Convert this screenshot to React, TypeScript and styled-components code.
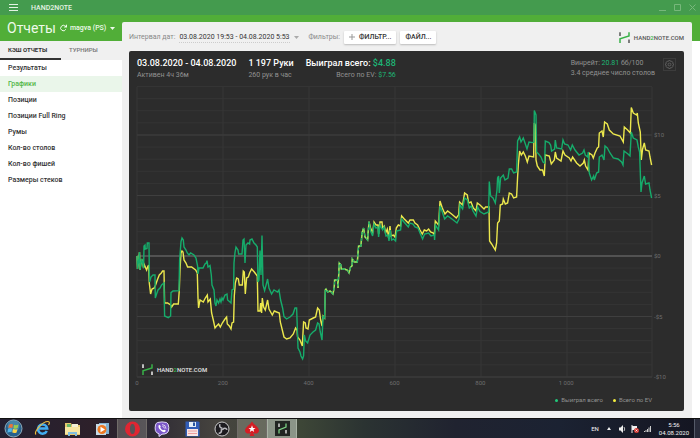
import React from 'react';
import styled, { createGlobalStyle } from 'styled-components';

const Global = createGlobalStyle`
  * { box-sizing: border-box; }
  body { margin: 0; font-family: Roboto, "Noto Sans", sans-serif; font-size: 7px; color: #333; }
  button, select { font: inherit; color: inherit; border: 0; background: none; padding: 0; margin: 0; appearance: none; cursor: pointer; }
  a { color: inherit; text-decoration: none; }
  svg { display: block; flex: none; }
`;

const Page = styled.div`
  display: flex;
  flex-direction: column;
  height: 100vh;
  min-height: 400px;
  background: #fff;
`;
const TitleBar = styled.header`
  display: flex;
  align-items: center;
  flex: none;
  height: 15px;
  padding: 0 4px 0 9px;
  background: #449b4e;
  color: #e4f3e4;
`;
const AppName = styled.span`
  margin-left: 13px;
  font-size: 7px;
  line-height: 10px;
  font-weight: 500;
`;
const WindowButtons = styled.div`
  display: flex;
  gap: 8px;
  margin-left: auto;
`;
const IconButton = styled.button<{ $tone?: string }>`
  display: flex;
  color: ${p => p.$tone || 'inherit'};
`;
const Body = styled.div`
  display: grid;
  grid-template-columns: 122px 1fr;
  flex: 1;
  min-height: 0;
  padding-right: 8px;
  background: linear-gradient(#51ae38 0, #51ae38 26px, #fff 26px);
`;
const Sidebar = styled.aside`
  display: flex;
  flex-direction: column;
`;
const SideHead = styled.div`
  display: flex;
  align-items: center;
  height: 26px;
  padding-left: 7px;
  color: #eefaea;
`;
const Title = styled.h1`
  margin: 0 4px 0 0;
  font-size: 14px;
  line-height: 18px;
  font-weight: 400;
`;
const Picker = styled.label<{ $gap: number }>`
  display: flex;
  align-items: center;
  gap: ${p => p.$gap}px;
`;
const RoomSelect = styled.select`
  margin-left: 3px;
  font-size: 7px;
  line-height: 10px;
  font-weight: 500;
  option { color: #333; }
`;
const Tabs = styled.div`
  display: grid;
  grid-template-columns: 1fr 1fr;
  height: 19px;
  background: #f0f0f0;
`;
const Tab = styled.button<{ $active?: boolean }>`
  padding-left: 8px;
  text-align: left;
  font-size: 6px;
  line-height: 10px;
  font-weight: ${p => (p.$active ? 700 : 500)};
  color: ${p => (p.$active ? '#333' : '#777')};
  border-bottom: 2px solid ${p => (p.$active ? '#333' : 'transparent')};
`;
const Nav = styled.nav`
  display: flex;
  flex-direction: column;
`;
const NavLink = styled.a<{ $active?: boolean }>`
  padding: 0 8px;
  font-size: 7px;
  line-height: 16px;
  font-weight: 500;
  color: ${p => (p.$active ? '#53b748' : '#333')};
  background: ${p => (p.$active ? '#eaf6ea' : 'transparent')};
`;
const Content = styled.main`
  display: flex;
  flex-direction: column;
  min-height: 0;
  margin-top: 7px;
  padding: 5px 8px 7px 7px;
  border-radius: 2px 2px 0 0;
  background: #f0f0f0;
`;
const Toolbar = styled.div`
  display: flex;
  align-items: center;
  height: 20px;
  margin-bottom: 4px;
`;
const Caption = styled.span`
  color: #888;
  font-size: 7px;
  line-height: 10px;
`;
const DateSelect = styled.select`
  font-size: 7px;
  line-height: 10px;
  border-bottom: 1px dotted #ccc;
`;
const Raised = styled.button`
  display: flex;
  align-items: center;
  gap: 4px;
  height: 13px;
  margin-left: 4px;
  padding: 0 5px;
  border-radius: 1px;
  background: #fff;
  box-shadow: 0 1px 2px #bbb;
  font-size: 7px;
  font-weight: 500;
`;
const Brand = styled.div<{ $dark?: boolean }>`
  display: flex;
  align-items: center;
  gap: 4px;
  color: ${p => (p.$dark ? '#e6e6e6' : '#555')};
  font-size: 6px;
  line-height: 11px;
  font-weight: 500;
  b { color: #35b34a; font-weight: 500; }
`;
const BrandRight = styled.div`
  margin-left: auto;
`;
const Card = styled.section`
  display: flex;
  flex-direction: column;
  flex: 1;
  min-height: 0;
  padding: 6px 8px;
  border-radius: 2px;
  background: #2c2c2c;
  color: #fff;
`;
const Stats = styled.div`
  display: flex;
  height: 30px;
`;
const Stat = styled.div<{ $gap?: number; $right?: boolean }>`
  margin-left: ${p => p.$gap || 0}px;
  text-align: ${p => (p.$right ? 'right' : 'left')};
  white-space: nowrap;
`;
const Big = styled.div`
  font-size: 9px;
  line-height: 13px;
  font-weight: 500;
`;
const Small = styled.div`
  font-size: 7px;
  line-height: 10px;
  color: #929292;
`;
const Money = styled.span`
  color: #1db676;
`;
const Side = styled.div`
  display: flex;
  align-items: flex-start;
  gap: 8px;
  margin-left: auto;
  padding-top: 1px;
`;
const Gear = styled.button`
  display: grid;
  place-items: center;
  width: 13px;
  height: 13px;
  border: 1px solid #3c3c3c;
  color: #666;
`;
const ChartGrid = styled.div`
  display: grid;
  grid-template-columns: 1fr 24px;
  grid-template-rows: 1fr 12px;
  flex: 1;
  min-height: 0;
`;
const Plot = styled.div`
  position: relative;
  min-height: 0;
`;
const PlotSvg = styled.svg`
  width: 100%;
  height: 100%;
  overflow: visible;
  path { fill: none; vector-effect: non-scaling-stroke; }
`;
const Watermark = styled.div`
  position: absolute;
  left: 5px;
  bottom: 2px;
  padding-right: 3px;
  background: #2c2c2c;
`;
const YAxis = styled.div`
  display: grid;
  grid-template-rows: 4fr 5fr 5fr 5fr 5fr;
  padding-left: 2px;
`;
const YLabel = styled.span`
  align-self: end;
  margin-bottom: -5px;
  font-size: 6px;
  line-height: 10px;
  color: #6e6e6e;
`;
const XAxis = styled.div`
  display: grid;
  grid-template-columns: repeat(6, 1fr);
`;
const XLabel = styled.span`
  width: 24px;
  margin-left: -12px;
  padding-top: 1px;
  text-align: center;
  font-size: 6px;
  line-height: 10px;
  color: #6e6e6e;
`;
const Legend = styled.div`
  display: flex;
  justify-content: flex-end;
  gap: 10px;
  padding: 6px 24px 0 0;
  font-size: 6px;
  line-height: 10px;
  color: #929292;
`;
const LegendItem = styled.span<{ $color: string }>`
  display: flex;
  align-items: center;
  gap: 3px;
  &::before {
    content: '';
    width: 3px;
    height: 3px;
    border-radius: 2px;
    background: ${p => p.$color};
  }
`;
const Taskbar = styled.footer`
  display: flex;
  align-items: stretch;
  flex: none;
  height: 20px;
  border-top: 1px solid #111;
  background: linear-gradient(90deg, #242031 0, #2d202a 13%, #2b2733 20%, #46443f 31%, #3d4637 43%, #2b3332 52%, #202330 65%, #1b2232 80%, #141521 100%);
  color: #f4f4f4;
`;
const TaskButton = styled.button<{ $open?: boolean; $focus?: boolean; $start?: boolean }>`
  display: grid;
  place-items: center;
  width: ${p => (p.$start ? 27 : 30)}px;
  border: 1px solid ${p => (p.$focus ? '#a9b3a5' : p.$open ? '#706c69' : 'transparent')};
  border-width: 0 1px;
  background: ${p => (p.$focus ? '#8b9588' : p.$open ? 'rgba(220,220,200,0.25)' : 'none')};
`;
const Tray = styled.div`
  display: flex;
  align-items: center;
  gap: 8px;
  margin-left: auto;
  font-size: 6px;
`;
const TrayIcons = styled.div`
  display: flex;
  align-items: center;
  gap: 5px;
`;
const Clock = styled.div`
  text-align: center;
  font-size: 6px;
  line-height: 8px;
`;
const Desktop = styled.button`
  align-self: stretch;
  width: 6px;
  margin-left: -3px;
  border-left: 1px solid #555a68;
  background: #292b3a;
`;

const stroke = { fill: 'none', stroke: 'currentColor' };

const Logo = ({ tone }: { tone: string }) => (
  <svg width="11" height="11" viewBox="0 0 11 11" fill="none" strokeWidth="1.500">
    <path d="M1 .3V4M10 7.400V11" stroke={tone} />
    <path d="M1 11V6.900L10 4V.3" stroke="#38b148" />
  </svg>
);
const BrandMark = ({ dark }: { dark?: boolean }) => (
  <Brand $dark={dark}>
    <Logo tone={dark ? '#eee' : '#555'} />
    <span>HAND<b>2</b>NOTE.COM</span>
  </Brand>
);
const Caret = ({ color }: { color: string }) => (
  <svg width="5" height="3" viewBox="0 0 5 3"><path d="M0 0h5L2.500 3z" fill={color} /></svg>
);

const start = '137,256 137.500,269 138.600,261 139.500,252 140,270 141.600,259 142.500,262 143.600,268';
const rise = '325.300,290 326,289 327.600,292 330.300,291 333,294 334.300,287 334.600,280 337.600,280 338,288 339.300,263 341,265 341.300,269 344.300,269 347.300,270 349,273 350.600,267 352,266 352.300,259 354.300,262 357.300,262 358.600,246 361,246 362,233 363.600,228 365,237 367.600,240 369,221.600';

const wonLine = `${start} 144,246 145,245 145.300,249 147,248.500 147.300,243 149,243 149.300,272 149.600,282 151,277 153,275 155,275 155.300,298 156.600,294 158,290 160,288 161.600,285 164,283 164.600,316 168.300,317.600 170.600,316 171,292.600 173,291 179,290.600 179.600,260 181,241.600 182,238 183.300,240 184,247 186,250 187.300,253 189,255 190.600,253 194,255 196,258 197.600,266 198,274 199,268 203,268 205,264 206.300,263 207,260.600 208,267 210,265.600 211.300,275 212,285 214,290 215,303 216,306 217,300 218.600,303 220,299 221,302 222,298 223,300 225,295 227,294 227.600,300 230,302 231,303 232,290 233.600,289 234,263 235,252.600 236,247 238,250 238.600,254 242,254 243,240 244,239 245,263 246,245 248,243 249.600,244 250,240 252,239 254,243 256,245 257.300,247 258,282 259,280 260,250.600 261,275 262,235.600 263,285 264.600,290.600 266.600,283 267.600,279 269,288 271.600,294 274,290 277.600,292 279,290 280.600,300 282.600,308 284,316.600 286.600,319 290,317 293,314 295,308 296.600,308 297.300,327 298,348 300,352 301,356 302.600,359 303.600,356 304.300,335 305.600,341 307.600,343 310,335 313,332 315.600,330 317.600,323 319,324 320.300,332 322,340 323,316.600 324.600,318 ${rise} 370.600,231 372.600,236 374,224 376,228 378,227 378.600,237 380,225 382.600,230 384,227 386,236 388,235 389,241 390.300,230 391.600,240 393.600,239 395.600,241 396.600,231 400.600,230 401.600,219 404,222 408.300,227 410,223 413,224 415,227 418,228 420,233 422.600,239 424.600,234 428.600,233 431,236 434.300,235 434.600,240 435.300,225 438.600,230 440,206 442,211 444.600,219 447.600,216 452,219 457,223 459,219 460,205 462.600,209 464.600,198 467.300,200 469.300,208 471.300,206 473,211 476,216 477.600,207 480,211.600 484,214 488.600,212 489.300,181.600 490.600,196 493,198 495.300,203 497,190 497.600,178 498.600,176 499.300,193 500.600,178 503.300,175 505,180 508,178 509.300,169 511.600,169 513.600,173 516.600,172 517.600,141 519.600,137 521,142 523.300,138 525,143 527,149 529,142 532.600,142.600 534,142 534.300,110.600 536,115 536.600,152 538.600,154 541,157 543,162 544.600,163 545.300,141 549,142.600 550.600,145 551.600,151 554.600,149 555.300,140 556.600,148 561.600,149 563,140 564.600,144 568,145 570.600,150 572.300,145 575,150 579,155 582.600,153 584,150 585.300,155 587.600,157 588.300,152 589.300,173 591.600,180 593.600,176 594.300,180 596.600,173 598.600,172 599.300,157 602,155 604,160 605,146 607.300,148 610,153 613.300,158 618,159 621.600,162 623,165 624,151 628,154 630,156 631.300,132 633.300,138 637,140 638.300,147 639.600,152 641,192 642,183 644.300,176 645.600,184 649,183 650,190 651.600,198`;

const evLine = `${start} 144,264 146.600,270 147.600,267 148.600,265 149.300,283 150.600,294 152,289 154.300,288 155.600,285 157.300,280 159.300,275 161.300,273 162.600,271 164,271 164.600,303 167.600,303 170.600,305 171.600,307 173.600,304 178.300,304 179.300,290 180,270 181,253 182,251 183,252 184,260 186,263 187.600,267 191.600,267 195.600,270 197.300,273 198,298 198.600,308 200,300 203.300,302 205.300,298 207.300,295 208,302 210.300,299 211.600,313 213.300,320 215,328 216.600,326 218.600,324 220.300,327 222.300,323 225,319 226.600,317 227.300,324 229.300,326 231,329 232,323 233.600,322 234.300,296 235.300,283 236.600,278 238.300,279 239.300,285 242.300,285 243.300,271 244.300,272 245.300,294 246.600,278 248.300,277 249.600,273 251.600,269 254.300,272 257.300,276 258,311 260,311 260.600,303 261.600,313 262.300,298 263.600,307 265.300,310 267.600,300 269,309 272.300,315 274.300,311 276.600,312 279.300,313 280.300,322 282.300,330 284,337 286.600,339 290,338 293.300,334 295.600,328 297,330 297.600,337 300,340 302.300,346 303.600,322 305.300,323 306,328 308,329 309.300,320 313.300,318 315.600,317 317.600,308 319.300,310 320.600,320 322,326 323,316 324.600,318 ${rise} 370.600,228 372.600,233 374,222 376,225 378,225 378.600,234 380,222 382,222 382.600,228 384.300,226 385.600,233 387.300,229 388.600,238 390,226 391,236 393.300,235 395,237 396.300,228 398.300,225 400.600,226 401.600,216 404.300,219 408.300,223 410,220 413.300,220 415,223 417.600,225 420,230 422.300,234 424.300,230 426.600,231 428.600,229 430.600,232 433.300,233 434.300,235 435.300,221 438.600,225 440,201 442.300,208 445,214 447.600,211 451.600,214 456.300,218 458.600,215 459.600,202 462.600,205 464.600,193 467.300,195 468.600,203 471,202 473.300,208 476,211 477.300,203 480,205 484,209 485.600,207 489,207 489.600,241 491.600,244 495.300,250 496.600,243 497.600,223 499.300,221 500.300,205 502.600,204 503.300,199 505.300,204 507.600,203 509.300,193 511.600,194 513.600,198 516.600,197 517.600,177 518.300,165 519.600,151 521.300,155 523.300,152 525.300,156 527.300,162 529,156 533.600,157 534.300,123 535.300,125 536,160 537.300,166 540,170 542.600,170 544.300,176 545.300,155 549.300,156 551.300,164 554.300,160 555.300,152 556.600,158 561,161 563,151 565,155 569.300,158 571,161 572.600,157 576.600,163 580,166 583.300,163 584.300,160 585.600,166 588,170 589,153 592,155 593.300,158 595,153 597.300,148 598.600,147 599.300,133 602,131 603.300,137 604.600,122 607.300,124 609.300,130 613.300,134 620,136 623.300,142 624.300,127 627.600,130 630.300,133 631.300,107.600 633.300,113 636.600,115 637.300,113 638.300,123 640.300,132 641.300,160 642.600,149 644.300,143 645.600,150 649,151 650,157 651.600,165`;

const minorGrid = Array.from({ length: 25 }, (_, i) => `M137 ${(86.6 + i * 12.1).toFixed(1)}H652`).join('');
const majorGrid = [135, 195.5, 316.5, 377].map(y => `M137 ${y}H652`).join('');
const columns = [137, 223, 309, 395, 481, 567, 652].map(x => `M${x} 87V377`).join('');

const reports = ['Результаты', 'Графики', 'Позиции', 'Позиции Full Ring', 'Румы', 'Кол-во столов', 'Кол-во фишей', 'Размеры стеков'];

const Windows = () => (
  <svg width="19" height="19" viewBox="0 0 19 19">
    <circle cx="9.500" cy="9.500" r="8.500" fill="#28618c" stroke="#8eacbd" />
    <circle cx="9.500" cy="7" r="6" fill="#5c9dbb" opacity=".6" />
    <path d="M5 6q2-1.500 4-.5l-.7 3.500q-2-1-4 .3z" fill="#ee7337" />
    <path d="M10 5.700q2 1 4.500-.2L13.700 9q-2 1.300-4.300.2z" fill="#9acb4b" />
    <path d="M4 10q2-1.300 4.100-.3l-.7 3.500q-2-.8-4 .5z" fill="#51b5e8" />
    <path d="M9 10q2.300 1 4.400-.1l-.8 3.500q-2 1.200-4.300.2z" fill="#fbd348" />
  </svg>
);
const Explorer = () => (
  <svg width="17" height="17" viewBox="0 0 17 17" fill="none">
    <path d="M12.800 11a4.600 4.600 0 1 1 .4-2.500H5" stroke="#43adf0" strokeWidth="2.500" />
    <path d="M2 14.500C-.5 12 8 1.500 14 1.500c2 0 1.500 2 .5 3.500" stroke="#edbd3e" strokeWidth="1.200" />
  </svg>
);
const Folder = () => (
  <svg width="17" height="16" viewBox="0 0 17 16">
    <path d="M1 2h6l1 2h8v10H1z" fill="#e5c76c" />
    <path d="M3 3h4v3H3z" fill="#67b66b" /><path d="M8 3h6v3H8z" fill="#f2f0d6" />
    <path d="M1 6h15v7H1z" fill="#f8e6a1" />
    <path d="M4 15v-4h9v4h-2v-2H6v2z" fill="#80bede" />
  </svg>
);
const Player = () => (
  <svg width="15" height="14" viewBox="0 0 15 14">
    <path d="M4 1h10v11H4z" fill="#80b2d3" /><path d="M1 2h10v11H1z" fill="#c7dce8" />
    <circle cx="7" cy="7.500" r="4.500" fill="#ed7923" /><path d="M5.500 4.800v5.400L10 7.500z" fill="#fff" />
  </svg>
);
const Opera = () => (
  <svg width="17" height="16" viewBox="0 0 17 16">
    <path fillRule="evenodd" d="M8.500.5a7.500 7.500 0 1 0 0 15 7.500 7.500 0 0 0 0-15zm0 2.500C10.300 3 11 5 11 8s-.7 5-2.500 5S6 11 6 8s.7-5 2.500-5z" fill="#df2632" />
  </svg>
);
const Viber = () => (
  <svg width="16" height="16" viewBox="0 0 16 16" fill="none">
    <path d="M3.500 1.500Q8 .3 12.500 1.500q2 .8 2.300 5t-1.800 5.500q-2 1.300-5 1.200L5 15.500v-2.700Q2 12 1.400 9.500T1.500 4q.5-2 2-2.500z" fill="#7b58c8" stroke="#e2dafa" />
    <path d="M4.500 4.500q1-1.200 1.900.2.700 1-.2 1.800.8 2 2.800 2.800 1-1.200 2.200-.2 1.200.8 0 1.700-1.200 1-3.500-.6Q4 7.500 4.500 4.500z" fill="#fff" />
    <path d="M8 3.500q4 .2 4 4.300M8.300 5.300q2 .2 2.100 2.200" stroke="#fff" strokeWidth=".7" />
  </svg>
);
const Floppy = () => (
  <svg width="15" height="16" viewBox="0 0 15 16">
    <path d="M.5.500h13l1 1v14H.5z" fill="#315cb6" /><path d="M4 1h7v5H4z" fill="#e3edf6" />
    <path d="M8 1.500h2v3.500H8z" fill="#2654a2" /><path d="M2 8h11v7H2z" fill="#f7e5e5" />
    <path d="M3 10h9M3 12.500h9" stroke="#ee9d9e" />
  </svg>
);
const Obs = () => (
  <svg width="16" height="16" viewBox="0 0 16 16" fill="none">
    <circle cx="8" cy="8" r="7" fill="#1d1c20" stroke="#c9c9c9" />
    <g stroke="#b9b9bd" strokeWidth="1.500" strokeLinecap="round">
      <path d="M8 7.200Q5 6.500 5.800 3.700" />
      <path d="M8.700 8.400Q10.800 6.200 12.800 8.300" />
      <path d="M7.300 8.600Q8.100 11.600 5.200 12.200" />
    </g>
  </svg>
);
const Spade = () => (
  <svg width="16" height="16" viewBox="0 0 16 16">
    <path d="M8 .5c1.500 3 7 5.500 7 9 0 3-3.500 4-6 2.200L10.500 15h-5L7 11.700C4.500 13.500 1 12.500 1 9.500c0-3.500 5.500-6 7-9z" fill="#d51d24" />
    <path d="M8 4.300 9 7h2.500L9.500 8.600l.7 2.500L8 9.600l-2.200 1.500.7-2.500L4.500 7H7z" fill="#fff" />
  </svg>
);
const H2n = () => (
  <svg width="15" height="15" viewBox="0 0 15 15" fill="none" strokeWidth="1.300">
    <path d="M0 0h15v15H0z" fill="#202522" />
    <path d="M4 2.500V6M11 9v3.500" stroke="#eee" />
    <path d="M4 12.500V9l7-3V2.500" stroke="#7bcf84" />
  </svg>
);

const tasks: { name: string; icon: React.ReactNode; open?: boolean; focus?: boolean }[] = [
  { name: 'Internet Explorer', icon: <Explorer /> },
  { name: 'Проводник', icon: <Folder /> },
  { name: 'Media Player', icon: <Player /> },
  { name: 'Opera', icon: <Opera />, open: true },
  { name: 'Viber', icon: <Viber /> },
  { name: 'Total Commander', icon: <Floppy /> },
  { name: 'OBS', icon: <Obs /> },
  { name: 'PokerStars', icon: <Spade />, open: true },
  { name: 'Hand2Note', icon: <H2n />, focus: true },
];

export default function App() {
  return (
    <Page>
      <Global />
      <TitleBar>
        <IconButton aria-label="Меню">
          <svg width="9" height="7" viewBox="0 0 9 7" {...stroke}><path d="M0 .5h9M0 3.500h9M0 6.500h9" /></svg>
        </IconButton>
        <AppName>HAND2NOTE</AppName>
        <WindowButtons>
          <IconButton aria-label="Свернуть" $tone="#77b77b"><svg width="7" height="7" viewBox="0 0 7 7" {...stroke}><path d="M0 6.500h7" /></svg></IconButton>
          <IconButton aria-label="Развернуть" $tone="#77b77b"><svg width="7" height="7" viewBox="0 0 7 7" {...stroke}><path d="M.5.500h6v6h-6z" /></svg></IconButton>
          <IconButton aria-label="Закрыть" $tone="#77b77b"><svg width="7" height="7" viewBox="0 0 7 7" {...stroke}><path d="m.5.500 6 6m0-6-6 6" /></svg></IconButton>
        </WindowButtons>
      </TitleBar>
      <Body>
        <Sidebar>
          <SideHead>
            <Title>Отчеты</Title>
            <IconButton aria-label="Обновить">
              <svg width="7" height="8" viewBox="0 0 7 8" {...stroke}><path d="M5.800 5.300A2.700 2.700 0 1 1 5.300 2.200" /><path d="M7 .3v3.200H3.800z" fill="currentColor" stroke="none" /></svg>
            </IconButton>
            <Picker $gap={3}>
              <RoomSelect aria-label="Игрок"><option>magva (PS)</option></RoomSelect>
              <Caret color="#eefaea" />
            </Picker>
          </SideHead>
          <Tabs>
            <Tab $active>КЭШ ОТЧЕТЫ</Tab>
            <Tab>ТУРНИРЫ</Tab>
          </Tabs>
          <Nav>
            {reports.map((name, i) => <NavLink key={name} href="#" $active={i === 1}>{name}</NavLink>)}
          </Nav>
        </Sidebar>
        <Content>
          <Toolbar>
            <Picker $gap={4}>
              <Caption>Интервал дат:</Caption>
              <DateSelect><option>03.08.2020 19:53 - 04.08.2020 5:53</option></DateSelect>
              <Caret color="#aaa" />
            </Picker>
            <Stat $gap={9}><Caption>Фильтры:</Caption></Stat>
            <Raised>
              <svg width="6" height="6" viewBox="0 0 6 6" fill="none" stroke="#999"><path d="M3 0v6M0 3h6" /></svg>
              ФИЛЬТР...
            </Raised>
            <Raised>ФАЙЛ...</Raised>
            <BrandRight><BrandMark /></BrandRight>
          </Toolbar>
          <Card>
            <Stats>
              <Stat><Big>03.08.2020 - 04.08.2020</Big><Small>Активен 4ч 36м</Small></Stat>
              <Stat $gap={12}><Big>1 197 Руки</Big><Small>260 рук в час</Small></Stat>
              <Stat $gap={12} $right>
                <Big>Выиграл всего: <Money>$4.88</Money></Big>
                <Small>Всего по EV: <Money>$7.56</Money></Small>
              </Stat>
              <Side>
                <Stat><Small>Винрейт: <Money>20.81</Money> бб/100</Small><Small>3.4 среднее число столов</Small></Stat>
                <Gear aria-label="Настройки">
                  <svg width="9" height="9" viewBox="0 0 9 9" {...stroke} strokeWidth=".8">
                    <path d="m3.700.5h1.600l.4 1.100 1.100-.4L7.900 2.300l-.5 1 1.100.4v1.600l-1.100.4.5 1-1.100 1.100-1.100-.4-.4 1.100H3.700l-.4-1.100-1.100.4-1.100-1.100.5-1L.5 5.300V3.700l1.100-.4-.5-1 1.100-1.100 1.100.4z" />
                    <circle cx="4.500" cy="4.500" r="1.400" />
                  </svg>
                </Gear>
              </Side>
            </Stats>
            <ChartGrid>
              <Plot>
                <PlotSvg viewBox="137 87 515 290" preserveAspectRatio="none" role="img" aria-label="График выигрыша">
                  <path d={minorGrid} stroke="#353535" />
                  <path d={columns} stroke="#363636" />
                  <path d={majorGrid} stroke="#3f3f3f" />
                  <path d="M137 256H652" stroke="#757575" />
                  <path d={`M${evLine}`} stroke="#ece84d" strokeWidth="1.400" />
                  <path d={`M${wonLine}`} stroke="#16ac6b" strokeWidth="1.400" />
                  <path d={`M${rise}`} stroke="#c9e651" strokeWidth="1" strokeDasharray="3 3" />
                </PlotSvg>
                <Watermark><BrandMark dark /></Watermark>
              </Plot>
              <YAxis>{['$10', '$5', '$0', '-$5', '-$10'].map(t => <YLabel key={t}>{t}</YLabel>)}</YAxis>
              <XAxis>{['0', '200', '400', '600', '800', '1 000'].map(t => <XLabel key={t}>{t}</XLabel>)}</XAxis>
            </ChartGrid>
            <Legend>
              <LegendItem $color="#21ca7b">Выиграл всего</LegendItem>
              <LegendItem $color="#f4ef3e">Всего по EV</LegendItem>
            </Legend>
          </Card>
        </Content>
      </Body>
      <Taskbar>
        <TaskButton aria-label="Пуск" $start><Windows /></TaskButton>
        {tasks.map(t => <TaskButton key={t.name} aria-label={t.name} $open={t.open} $focus={t.focus}>{t.icon}</TaskButton>)}
        <Tray>
          <span>EN</span>
          <svg width="4" height="3" viewBox="0 0 4 3"><path d="M2 0 4 3H0z" fill="#eee" /></svg>
          <TrayIcons>
            <svg width="7" height="8" viewBox="0 0 7 8"><path d="M0 2.500h1.500L4 0v8L1.500 5.500H0z" fill="#eee" /><path d="M5 2q1.500 2 0 4" fill="none" stroke="#bbb" /></svg>
            <svg width="8" height="8" viewBox="0 0 8 8"><path d="M1 0v8" stroke="#eee" /><path d="M1 1h5v4H1z" fill="#eee" /><circle cx="5.500" cy="5.500" r="2.500" fill="#d33b35" /><path d="m4.500 4.500 2 2m0-2-2 2" stroke="#fff" strokeWidth=".7" /></svg>
            <svg width="7" height="6" viewBox="0 0 7 6"><path d="M0 5h1v1H0zm1.500-1h1v2h-1zM3 3h1v3H3zm1.500-1.500h1V6h-1zM6 0h1v6H6z" fill="#ccc" /></svg>
          </TrayIcons>
          <Clock>5:56<br />04.08.2020</Clock>
          <Desktop aria-label="Показать рабочий стол" />
        </Tray>
      </Taskbar>
    </Page>
  );
}
